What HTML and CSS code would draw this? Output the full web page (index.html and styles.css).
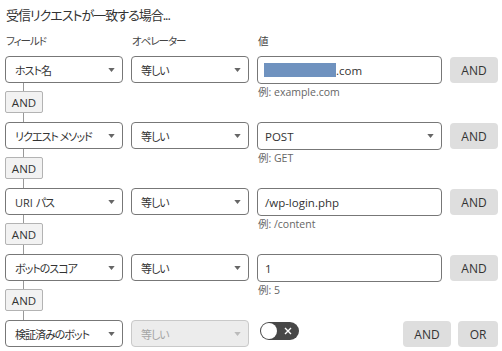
FILE: index.html
```html
<!DOCTYPE html>
<html lang="ja">
<head>
<meta charset="UTF-8">
<title>受信リクエストのルール</title>
<link rel="stylesheet" href="styles.css">
</head>
<body>
  <h2 class="title">受信リクエストが一致する場合...</h2>

  <div class="grid labels">
    <span>フィールド</span>
    <span>オペレーター</span>
    <span>値</span>
  </div>

  <!-- host name -->
  <div class="grid cond">
    <div class="select"><span>ホスト名</span><svg class="caret" viewBox="0 0 8 5"><path d="M0 0h8L4 5z"/></svg></div>
    <div class="select"><span>等しい</span><svg class="caret" viewBox="0 0 8 5"><path d="M0 0h8L4 5z"/></svg></div>
    <div class="input"><span class="redact"></span>.com</div>
    <button class="btn">AND</button>
    <div class="link"><i class="line"></i><button class="and-box">AND</button><i class="line low"></i></div>
    <div class="hint">例: example.com</div>
  </div>

  <!-- method -->
  <div class="grid cond">
    <div class="select"><span>リクエスト メソッド</span><svg class="caret" viewBox="0 0 8 5"><path d="M0 0h8L4 5z"/></svg></div>
    <div class="select"><span>等しい</span><svg class="caret" viewBox="0 0 8 5"><path d="M0 0h8L4 5z"/></svg></div>
    <div class="select value"><span>POST</span><svg class="caret" viewBox="0 0 8 5"><path d="M0 0h8L4 5z"/></svg></div>
    <button class="btn">AND</button>
    <div class="link"><i class="line"></i><button class="and-box">AND</button><i class="line low"></i></div>
    <div class="hint">例: GET</div>
  </div>

  <!-- uri path -->
  <div class="grid cond">
    <div class="select"><span><span class="latin">URI </span>パス</span><svg class="caret" viewBox="0 0 8 5"><path d="M0 0h8L4 5z"/></svg></div>
    <div class="select"><span>等しい</span><svg class="caret" viewBox="0 0 8 5"><path d="M0 0h8L4 5z"/></svg></div>
    <div class="input">/wp-login.php</div>
    <button class="btn">AND</button>
    <div class="link"><i class="line"></i><button class="and-box">AND</button><i class="line low"></i></div>
    <div class="hint">例: /content</div>
  </div>

  <!-- bot score -->
  <div class="grid cond">
    <div class="select"><span>ボットのスコア</span><svg class="caret" viewBox="0 0 8 5"><path d="M0 0h8L4 5z"/></svg></div>
    <div class="select"><span>等しい</span><svg class="caret" viewBox="0 0 8 5"><path d="M0 0h8L4 5z"/></svg></div>
    <div class="input">1</div>
    <button class="btn">AND</button>
    <div class="link"><i class="line"></i><button class="and-box">AND</button><i class="line low"></i></div>
    <div class="hint">例: 5</div>
  </div>

  <!-- verified bot -->
  <div class="grid cond last">
    <div class="select"><span>検証済みのボット</span><svg class="caret" viewBox="0 0 8 5"><path d="M0 0h8L4 5z"/></svg></div>
    <div class="select disabled"><span>等しい</span><svg class="caret" viewBox="0 0 8 5"><path d="M0 0h8L4 5z"/></svg></div>
    <div class="tail">
      <div class="toggle">
        <span class="knob"></span>
        <svg class="x" viewBox="0 0 8 8"><path d="M1 1l6 6M7 1L1 7"/></svg>
      </div>
      <div class="actions">
        <button class="btn">AND</button>
        <button class="btn or">OR</button>
      </div>
    </div>
  </div>
</body>
</html>
```

FILE: styles.css
```css
body {
    margin: 0;
    padding: 6px 4px 0 5px;
    background-color: #fff;
    color: #333;
    font-family: "Open Sans", "Noto Sans CJK JP", sans-serif;
    font-feature-settings: "palt";
}

.title {
    margin: 0 0 0 1px;
    font-size: 13px;
    line-height: 18px;
    font-weight: normal;
    letter-spacing: -1px;
    color: #333;
}

.grid {
    display: grid;
    grid-template-columns: 118px 118px 185px 48px;
    column-gap: 8px;
}

.labels {
    margin-top: 9px;
    margin-bottom: 7px;
    font-size: 10.5px;
    line-height: 16px;
    letter-spacing: -1px;
    color: #444;
}

.labels span {
    padding-left: 1px;
}

.cond {
    grid-template-rows: 28px auto;
}

.select {
    box-sizing: border-box;
    height: 27px;
    display: flex;
    align-items: center;
    justify-content: space-between;
    padding: 0 7px 0 9px;
    border: 1px solid #777;
    border-radius: 4px;
    background-color: #fff;
    font-size: 11px;
    letter-spacing: -1px;
    color: #333;
}

.select .latin {
    letter-spacing: 0;
}

.select.value {
    height: 28px;
    padding-left: 7px;
    font-size: 11.5px;
    letter-spacing: 0;
}

.select.disabled {
    background-color: #ececec;
    border-color: #c9c9c9;
    color: #a5a5a5;
}

.caret {
    width: 7px;
    height: 4px;
    fill: #666;
}

.disabled .caret {
    fill: #bbb;
}

.input {
    box-sizing: border-box;
    height: 28px;
    display: flex;
    align-items: center;
    padding: 0 7px;
    border: 1px solid #777;
    border-radius: 4px;
    font-size: 11.5px;
    color: #333;
}

.redact {
    display: inline-block;
    width: 72px;
    height: 14px;
    margin-left: -1px;
    background-color: #6f92bf;
}

.btn {
    box-sizing: border-box;
    height: 26px;
    margin-top: 1px;
    padding: 0;
    border: none;
    border-radius: 4px;
    background-color: #dedede;
    color: #333;
    font-family: inherit;
    font-size: 12px;
}

.link {
    grid-column: 1;
    display: flex;
    flex-direction: column;
    align-items: flex-start;
    margin-top: -1px;
}

.line {
    display: block;
    width: 1px;
    height: 8px;
    margin-left: 18px;
    background-color: #999;
}

.line.low {
    height: 9px;
}

.and-box {
    box-sizing: border-box;
    width: 38px;
    height: 22px;
    padding: 0;
    border: 1px solid #b3b3b3;
    border-radius: 2px;
    background-color: #f2f2f2;
    color: #333;
    font-family: inherit;
    font-size: 11.5px;
}

.hint {
    grid-column: 3;
    padding: 1px 0 0 1px;
    font-size: 10.5px;
    line-height: 14px;
    color: #666;
}

.tail {
    grid-column: 3 / 5;
    display: flex;
    justify-content: space-between;
    align-items: flex-start;
}

.toggle {
    display: flex;
    align-items: center;
    gap: 7px;
    box-sizing: border-box;
    width: 39px;
    height: 18px;
    margin: 2px 0 0 3px;
    padding: 1px;
    border-radius: 9px;
    background-color: #474747;
}

.knob {
    width: 16px;
    height: 16px;
    border-radius: 50%;
    background-color: #fff;
}

.x {
    width: 8px;
    height: 8px;
    stroke: #fff;
    stroke-width: 1.4;
}

.actions {
    display: flex;
    gap: 7px;
}

.actions .btn {
    width: 48px;
}

.actions .or {
    width: 40px;
}

.cond > .btn {
    width: 48px;
}
```
